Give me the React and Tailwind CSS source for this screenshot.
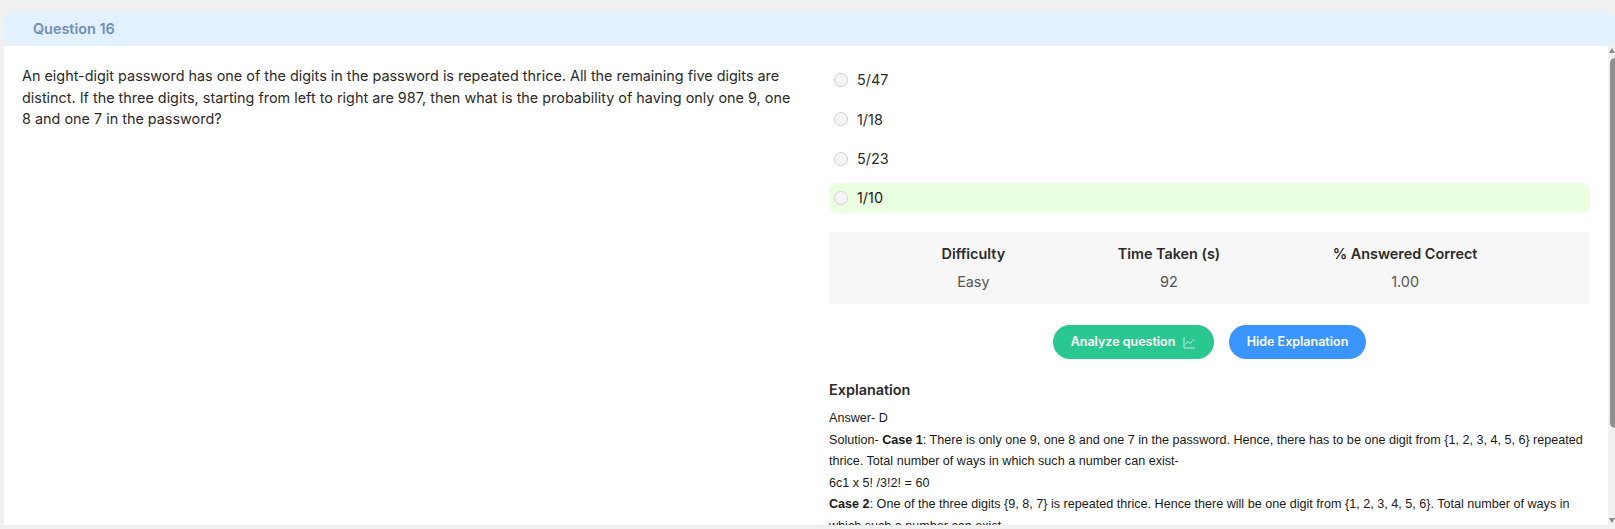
import React from 'react';

const options = [
  { label: '5/47' },
  { label: '1/18' },
  { label: '5/23' },
  { label: '1/10', correct: true },
];

const stats = [
  { title: 'Difficulty', value: 'Easy' },
  { title: 'Time Taken (s)', value: '92' },
  { title: '% Answered Correct', value: '1.00' },
];

function ChartIcon() {
  return (
    <svg width="13" height="13" viewBox="0 0 13 13" fill="none" stroke="currentColor" strokeWidth="1" className="text-white/70">
      <path d="M1 1v11h11" />
      <path d="M2.5 8.5 5 5.5l2 2 3.5-4 1.5 1" />
    </svg>
  );
}

export default function App() {
  return (
    <div className="h-[529px] overflow-hidden bg-[#f0f0f0] pt-[12px] pb-[4px] pl-[4px] font-['Inter',sans-serif]">
      <div className="flex h-full flex-col overflow-hidden">
        <div className="h-[34px] shrink-0 rounded-lg bg-[#e3f0ff] pl-[29px] text-[14.4px] leading-[34px] font-semibold text-[#6f8fbb]">
          Question 16
        </div>
        <div className="relative flex min-h-0 flex-1 overflow-hidden bg-white">
          <div className="w-[825px] shrink-0 pt-[19px] pr-[26px] pl-[18px] text-[14.4px] leading-[21.6px] text-[#2b2b2b]">
            An eight-digit password has one of the digits in the password is repeated thrice. All the remaining five digits are distinct. If the three digits, starting from left to right are 987, then what is the probability of having only one 9, one 8 and one 7 in the password?
          </div>
          <div className="w-[761px] shrink-0 pt-[19px]">
            <div className="flex flex-col gap-[9.4px]">
              {options.map(({ label, correct }) => (
                <div key={label} className={`flex h-[30px] items-center gap-[9px] rounded-lg pl-[5px] text-[14.4px] ${correct ? 'bg-[#eaffdf] text-[#1a1a1a]' : 'text-[#2b2b2b]'}`}>
                  <span className="size-[14px] rounded-full border border-[#d2d2d2] bg-[#f5f5f5]" />
                  {label}
                </div>
              ))}
            </div>
            <div className="mt-[18.8px] flex h-[72px] items-center justify-evenly bg-[#f7f7f7]">
              {stats.map(({ title, value }) => (
                <div key={title} className="flex flex-col gap-[8px] text-center text-[14.4px] leading-[20px]">
                  <div className="font-semibold text-[#2b2b2b]">{title}</div>
                  <div className="text-[#555555]">{value}</div>
                </div>
              ))}
            </div>
            <div className="mt-[21px] flex justify-center gap-[15px]">
              <button className="flex h-[34px] w-[161px] items-center justify-center gap-[8px] rounded-full bg-[#2bc791] pt-[1px] text-[12.5px] font-semibold text-white">
                Analyze question <ChartIcon />
              </button>
              <button className="h-[34px] w-[137px] rounded-full bg-[#3b95ff] pt-[1px] text-[12.5px] font-semibold text-white">
                Hide Explanation
              </button>
            </div>
            <div className="mt-[21px] text-[14.4px] leading-[20px] font-semibold text-[#2b2b2b]">Explanation</div>
            <div className="mt-[8px] font-['Liberation_Sans',sans-serif] text-[12.6px] leading-[21.6px] text-[#1a1a1a]">
              <p>Answer- D</p>
              <p>Solution- <b>Case 1</b>: There is only one 9, one 8 and one 7 in the password. Hence, there has to be one digit from {'{1, 2, 3, 4, 5, 6}'} repeated thrice. Total number of ways in which such a number can exist-</p>
              <p>6c1 x 5! /3!2! = 60</p>
              <p><b>Case 2</b>: One of the three digits {'{9, 8, 7}'} is repeated thrice. Hence there will be one digit from {'{1, 2, 3, 4, 5, 6}'}. Total number of ways in which such a number can exist-</p>
            </div>
          </div>
          {/* fake scrollbar */}
          <div className="absolute top-0 right-0 bottom-0 w-[7px] bg-[#f0f0f0]">
            <div className="mt-[2px] ml-[1px] h-0 w-0 border-x-[3px] border-b-[5px] border-x-transparent border-b-[#8a8a8a]" />
            <div className="mt-[5px] ml-[2px] h-[370px] w-[5px] rounded-l-full bg-[#8f8f8f]" />
            <div className="absolute bottom-[2px] left-[1px] h-0 w-0 border-x-[3px] border-t-[5px] border-x-transparent border-t-[#8a8a8a]" />
          </div>
        </div>
      </div>
    </div>
  );
}
